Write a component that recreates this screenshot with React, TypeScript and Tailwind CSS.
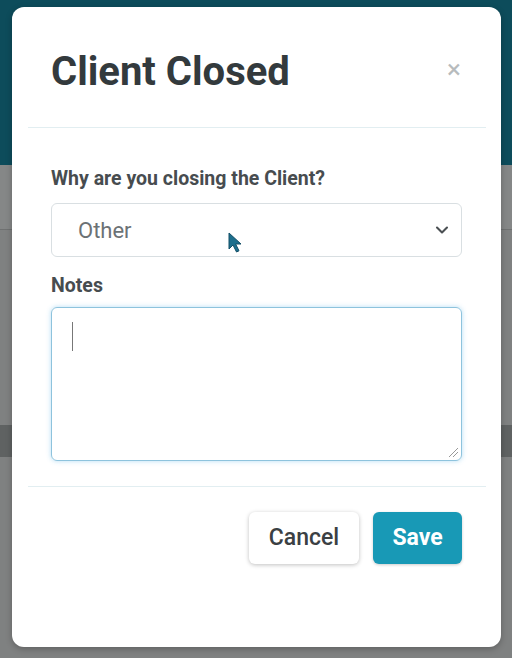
import { ChevronDown } from "lucide-react"

const font = { fontFamily: "Roboto, 'Liberation Sans', sans-serif" }

const Backdrop = () => {
  return (
    <div className="absolute inset-0 flex flex-col">
      <div className="h-[165px] bg-[#0d4c5b]" />
      <div className="h-[65px] bg-[#858787] border-b border-[#6f7171]" />
      <div className="h-[195px] bg-[#7f8181]" />
      <div className="h-[32px] bg-[#5f6262]" />
      <div className="flex-1 bg-[#7f8181]" />
    </div>
  )
}

const Cursor = () => (
  <svg width="16" height="22" viewBox="0 0 16 22" className="absolute left-[228px] top-[232px]">
    <path d="M1 1 L1 17 L5 13 L8.5 20 L11 18.8 L7.6 12 L13 12 Z" fill="#1c6e8c" stroke="#134e66" strokeWidth="1" />
  </svg>
)

const App = () => {
  return (
    <div className="relative w-[512px] h-[658px] overflow-hidden" style={font}>
      <Backdrop />

      {/* Modal */}
      <div className="absolute left-[12px] top-[7px] w-[489px] h-[640px] bg-white rounded-[12px] shadow-[0_2px_6px_rgba(0,0,0,0.25)] flex flex-col">
        <div className="relative h-[120px] px-[39px] pt-[45px]">
          <h1 className="text-[40px] font-bold text-[#333a3d] leading-none">Client Closed</h1>
          <span className="absolute right-[40px] top-[49px] text-[26px] leading-none text-[#b7bbbd]">×</span>
        </div>
        <div className="mx-[16px] mr-[15px] h-px bg-[#e2eef1]" />

        <div className="relative px-[39px] pt-[40px] flex flex-col">
          <label className="text-[19.5px] font-bold text-[#474c4f] leading-[22px]">Why are you closing the Client?</label>
          <div className="mt-[13px] h-[54px] w-[411px] border border-[#d9dfe2] rounded-[6px] flex items-center justify-between pl-[26px] pr-[9px]">
            <span className="text-[22px] text-[#6c7275]">Other</span>
            <ChevronDown size={20} strokeWidth={2.5} className="text-[#4a4f52]" />
          </div>
          <label className="mt-[18px] text-[19.5px] font-bold text-[#474c4f] leading-[22px]">Notes</label>
          <div className="relative mt-[10px] h-[154px] w-[411px] border border-[#8ec3dd] rounded-[6px] shadow-[0_0_5px_rgba(90,180,230,0.45)]">
            <span className="absolute left-[20px] top-[14px] w-px h-[29px] bg-[#777]" />
            <svg width="12" height="12" viewBox="0 0 12 12" className="absolute right-[2px] bottom-[2px]">
              <path d="M2 11 L11 2 M6 11 L11 6" stroke="#999" strokeWidth="1" />
            </svg>
          </div>
        </div>

        <div className="mt-[25px] mx-[16px] mr-[15px] h-px bg-[#e2eef1]" />

        <div className="flex justify-end gap-[14px] px-[39px] pt-[25px]">
          <button className="h-[52px] w-[110px] rounded-[6px] bg-white text-[23px] font-medium text-[#3b4043] shadow-[0_1px_4px_rgba(0,0,0,0.25)]">
            Cancel
          </button>
          <button className="h-[52px] w-[89px] rounded-[6px] bg-[#1899b6] text-[23px] font-bold text-white shadow-[0_1px_3px_rgba(0,0,0,0.2)]">
            Save
          </button>
        </div>
      </div>

      <Cursor />
    </div>
  )
}

export default App
